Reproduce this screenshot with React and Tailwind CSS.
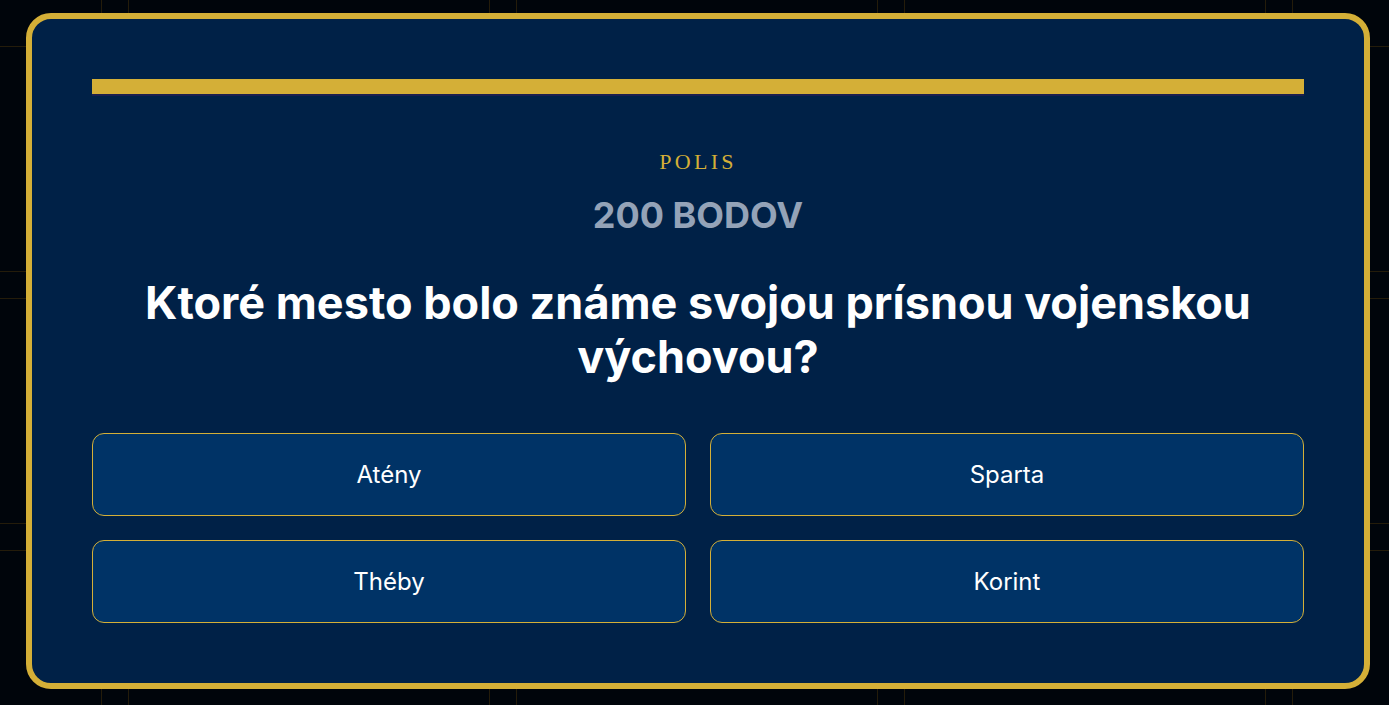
import React from 'react';

const answers = ['Atény', 'Sparta', 'Théby', 'Korint'];

const Board = () => {
  const rows = [0, 1, 2, 3];
  const cols = [0, 1, 2, 3, 4];
  return (
    <div className="absolute inset-0 overflow-hidden bg-[#00050b]">
      <div className="-ml-[260px] -mt-[180px] grid grid-cols-[repeat(5,362px)] grid-rows-[200px_226px_226px_226px] gap-[26px]">
        {rows.map((r) =>
          cols.map((c) => (
            <div
              key={`${r}-${c}`}
              className={
                r === 0
                  ? 'border-x border-[#241c0a]'
                  : 'border border-[#241c0a]'
              }
            />
          ))
        )}
      </div>
    </div>
  );
};

const App = () => {
  return (
    <div className="relative h-[705px] w-[1389px] overflow-hidden font-['Inter',sans-serif]">
      <Board />

      {/* Question modal */}
      <div className="absolute inset-0 pl-[26px] pt-[13px]">
        <div className="w-[1344px] rounded-[25px] border-[6px] border-[#d4af37] bg-[#002147] p-[60px]">
          <div className="h-[15px] w-full bg-[#d4af37] shadow-[0_2px_0_#1c1f4f]" />

          <div className="mt-[51px] flex flex-col items-center text-center">
            <div className="font-['Liberation_Serif',serif] text-[22px] leading-[33px] tracking-[0.15em] text-[#d4af37]">
              POLIS
            </div>
            <div className="mt-[17px] text-[36px] font-bold leading-[40px] text-[#94a3b8]">
              200 BODOV
            </div>
            <h2 className="mt-[41px] text-[45px] font-bold leading-[1.2] text-white">
              Ktoré mesto bolo známe svojou prísnou vojenskou výchovou?
            </h2>
          </div>

          <div className="mt-[49px] grid grid-cols-2 gap-6">
            {answers.map((a) => (
              <button
                key={a}
                className="h-[83px] rounded-xl border border-[#d4af37] bg-[#003366] text-[24px] text-white"
              >
                {a}
              </button>
            ))}
          </div>
        </div>
      </div>
    </div>
  );
};

export default App;
